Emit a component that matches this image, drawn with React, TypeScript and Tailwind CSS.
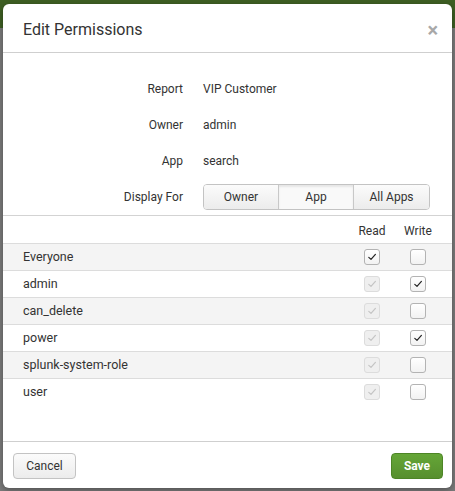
import React from "react";

function Check({ color }: { color: string }) {
  return (
    <svg width="10" height="10" viewBox="0 0 10 10" fill="none">
      <path d="M1.8 5.4 L4 7.4 L8.4 2.4" stroke={color} strokeWidth="1.2" strokeLinecap="round" strokeLinejoin="round" />
    </svg>
  );
}

function Box({ checked, disabled }: { checked: boolean; disabled?: boolean }) {
  if (disabled) {
    return (
      <div className="w-4 h-4 rounded-[3px] border border-[#dcdcdc] bg-[#efefef] flex items-center justify-center">
        {checked && <Check color="#c4c4c4" />}
      </div>
    );
  }
  return (
    <div className="w-4 h-4 rounded-[3px] border border-[#b3b3b3] bg-gradient-to-b from-[#ffffff] to-[#f2f2f2] flex items-center justify-center">
      {checked && <Check color="#222" />}
    </div>
  );
}

const rows = [
  { name: "Everyone", read: true, readDis: false, write: false },
  { name: "admin", read: true, readDis: true, write: true },
  { name: "can_delete", read: true, readDis: true, write: false },
  { name: "power", read: true, readDis: true, write: true },
  { name: "splunk-system-role", read: true, readDis: true, write: false },
  { name: "user", read: true, readDis: true, write: false },
];

export default function App() {
  return (
    <div
      className="relative w-[455px] h-[491px] overflow-hidden bg-[#7a7a7a]"
      style={{ fontFamily: "Roboto, 'Liberation Sans', sans-serif" }}
    >
      <div className="h-[28px] bg-[#3e5f23]" />
      <div className="absolute left-[3px] top-[4px] w-[449px] h-[484px] bg-white rounded-[6px] flex flex-col text-[#333] shadow-[0_2px_6px_rgba(0,0,0,0.35)]">
        <div className="h-[49px] shrink-0 border-b border-[#cfcfcf] flex items-center justify-between pl-[20px] pr-[14px] pt-[3px]">
          <span className="text-[16px] text-[#333] leading-none">Edit Permissions</span>
          <span className="text-[#a8a8a8] text-[20px] font-bold leading-none">×</span>
        </div>
        <div className="pt-[18px] text-[12px]">
          <div className="grid grid-cols-[180px_1fr] gap-x-[20px]">
            <div className="h-[36px] flex items-center justify-end">Report</div>
            <div className="h-[36px] flex items-center">VIP Customer</div>
            <div className="h-[36px] flex items-center justify-end">Owner</div>
            <div className="h-[36px] flex items-center">admin</div>
            <div className="h-[36px] flex items-center justify-end">App</div>
            <div className="h-[36px] flex items-center">search</div>
            <div className="h-[36px] flex items-center justify-end">Display For</div>
            <div className="h-[36px] flex items-center">
              <div className="flex h-[26px] w-[227px] rounded-[4px] border border-[#c3c3c3] overflow-hidden text-[12px]">
                <div className="w-[75px] flex items-center justify-center bg-gradient-to-b from-[#fbfbfb] to-[#ececec] border-r border-[#c8c8c8]">Owner</div>
                <div className="w-[75px] flex items-center justify-center bg-[#f9f9f9] shadow-[inset_0_2px_2px_rgba(0,0,0,0.08)] border-r border-[#c8c8c8]">App</div>
                <div className="flex-1 flex items-center justify-center bg-gradient-to-b from-[#fbfbfb] to-[#ececec]">All Apps</div>
              </div>
            </div>
          </div>
        </div>
        <div className="flex-1 border-t border-[#d3d3d3] text-[12.5px]">
          <div className="h-[27px] flex items-center pl-[20px] pt-[3px] text-[12px]">
            <div className="flex-1" />
            <div className="w-[40px] text-center mr-[6px]">Read</div>
            <div className="w-[40px] text-center mr-[14px]">Write</div>
          </div>
          {rows.map((r, i) => (
            <div
              key={r.name}
              className={`h-[27px] flex items-center pl-[20px] border-t border-[#dcdcdc] ${i % 2 === 0 ? "bg-[#f4f4f4]" : "bg-white"}`}
            >
              <div className="flex-1">{r.name}</div>
              <div className="w-[40px] flex justify-center mr-[6px]">
                <Box checked={r.read} disabled={r.readDis} />
              </div>
              <div className="w-[40px] flex justify-center mr-[14px]">
                <Box checked={r.write} />
              </div>
            </div>
          ))}
        </div>
        <div className="h-[47px] shrink-0 border-t border-[#cfcfcf] flex items-center justify-between pl-[10px] pr-[9px] pt-[2px]">
          <button className="h-[26px] w-[63px] rounded-[4px] border border-[#c3c3c3] bg-gradient-to-b from-[#fbfbfb] to-[#ececec] text-[12px] text-[#333]">
            Cancel
          </button>
          <button className="h-[26px] w-[52px] rounded-[4px] border border-[#4d8526] bg-gradient-to-b from-[#65a637] to-[#578f2e] text-[12px] font-bold text-white">
            Save
          </button>
        </div>
      </div>
    </div>
  );
}
